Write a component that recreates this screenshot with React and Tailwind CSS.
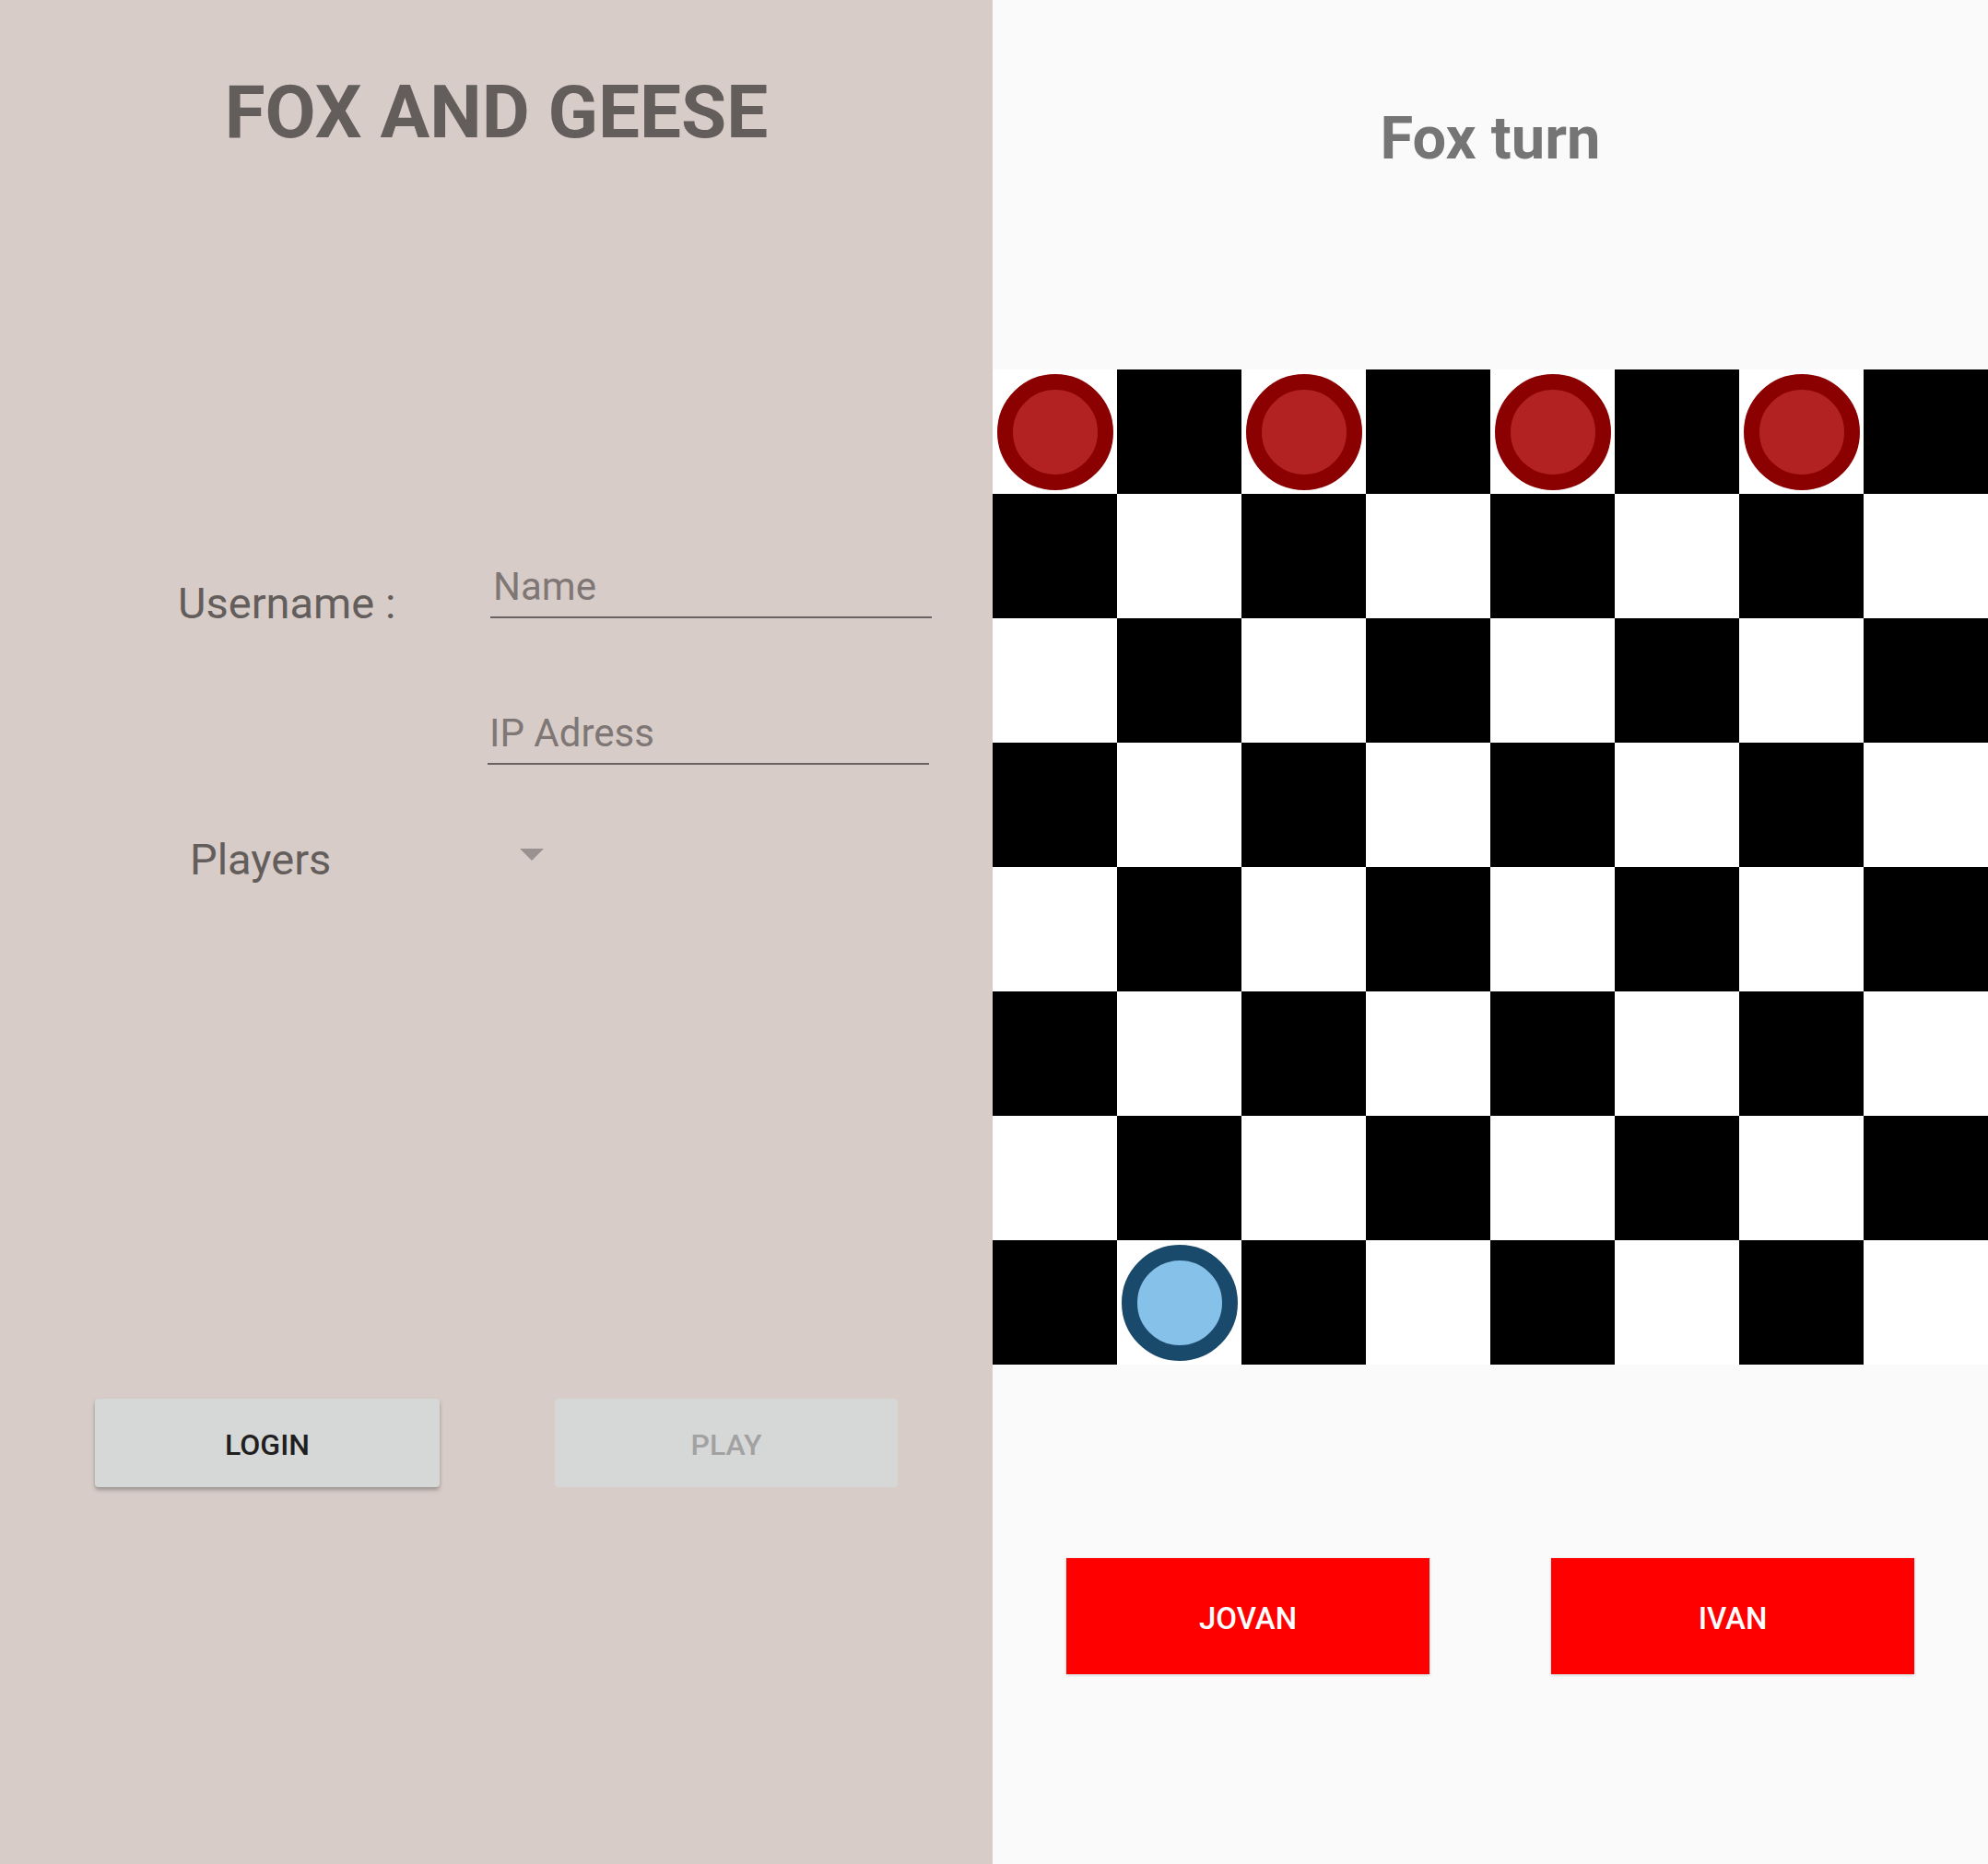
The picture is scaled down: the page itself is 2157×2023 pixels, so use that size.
import React from "react";

function Piece({ outer, inner }) {
  return (
    <div
      className="w-[126px] h-[126px] rounded-full border-[17px] box-border"
      style={{ borderColor: outer, backgroundColor: inner }}
    />
  );
}

export default function App() {
  const squares = [];
  for (let r = 0; r < 8; r++) {
    for (let c = 0; c < 8; c++) {
      const black = (r + c) % 2 === 1;
      let piece = null;
      if (r === 0 && c % 2 === 0) piece = <Piece outer="#8b0000" inner="#b22222" />;
      if (r === 7 && c === 1) piece = <Piece outer="#1a4a6b" inner="#85c1e9" />;
      squares.push(
        <div
          key={r + "-" + c}
          className={(black ? "bg-black" : "bg-white") + " flex items-center justify-center"}
        >
          {piece}
        </div>
      );
    }
  }

  return (
    <div className="flex w-[2157px] h-[2023px] overflow-hidden font-['Roboto',sans-serif]">
      {/* Left panel */}
      <div className="w-[1077px] h-full bg-[#d7ccc8] flex flex-col shrink-0">
        <h1 className="mt-[82px] text-center text-[80px] leading-none font-bold text-[#635d5b]">
          FOX AND GEESE
        </h1>

        {/* Username row */}
        <div className="mt-[454px] flex items-start h-[62px]">
          <div className="ml-[193px] w-[339px] mt-[15px] text-[47px] leading-none text-[#635d5b]">
            Username :
          </div>
          <div className="w-[479px] pl-[3px] pb-[11px] border-b-2 border-[#6b6361] text-[42px] leading-none text-[#7f7775]">
            Name
          </div>
        </div>

        {/* IP row */}
        <div className="mt-[97px] flex">
          <div className="ml-[529px] w-[479px] pl-[2px] pb-[11px] border-b-2 border-[#6b6361] text-[42px] leading-none text-[#7f7775]">
            IP Adress
          </div>
        </div>

        {/* Players row */}
        <div className="mt-[79px] flex items-start h-[47px]">
          <div className="ml-[206px] w-[358px] text-[47px] leading-none text-[#635d5b]">Players</div>
          <svg className="mt-[12px]" width="26" height="13" viewBox="0 0 26 13">
            <polygon points="0,0 26,0 13,13" fill="#9a9290" />
          </svg>
        </div>

        {/* Buttons */}
        <div className="mt-[562px] flex">
          <button className="ml-[103px] w-[374px] h-[96px] pt-[3px] rounded bg-[#d6d7d7] shadow-[0_3px_4px_rgba(0,0,0,0.28)] text-[32px] font-medium text-[#1f1f1f]">
            LOGIN
          </button>
          <button className="ml-[125px] w-[372px] h-[96px] pt-[3px] rounded bg-[#d6d7d7] text-[32px] font-medium text-[#a2a2a2]">
            PLAY
          </button>
        </div>
      </div>

      {/* Right panel */}
      <div className="w-[1080px] h-full bg-[#fafafa] flex flex-col shrink-0">
        <h2 className="mt-[118px] text-center text-[65px] leading-none font-bold text-[#757575]">
          Fox turn
        </h2>
        <div className="mt-[218px] w-[1080px] h-[1080px] grid grid-cols-8 grid-rows-8">
          {squares}
        </div>
        <div className="mt-[210px] flex px-[80px] gap-[132px]">
          <button className="w-[394px] h-[126px] pt-[5px] bg-[#ff0000] shadow-[0_1px_3px_rgba(0,0,0,0.2)] text-white text-[33px] font-medium">
            JOVAN
          </button>
          <button className="w-[394px] h-[126px] pt-[5px] bg-[#ff0000] shadow-[0_1px_3px_rgba(0,0,0,0.2)] text-white text-[33px] font-medium">
            IVAN
          </button>
        </div>
      </div>
    </div>
  );
}
